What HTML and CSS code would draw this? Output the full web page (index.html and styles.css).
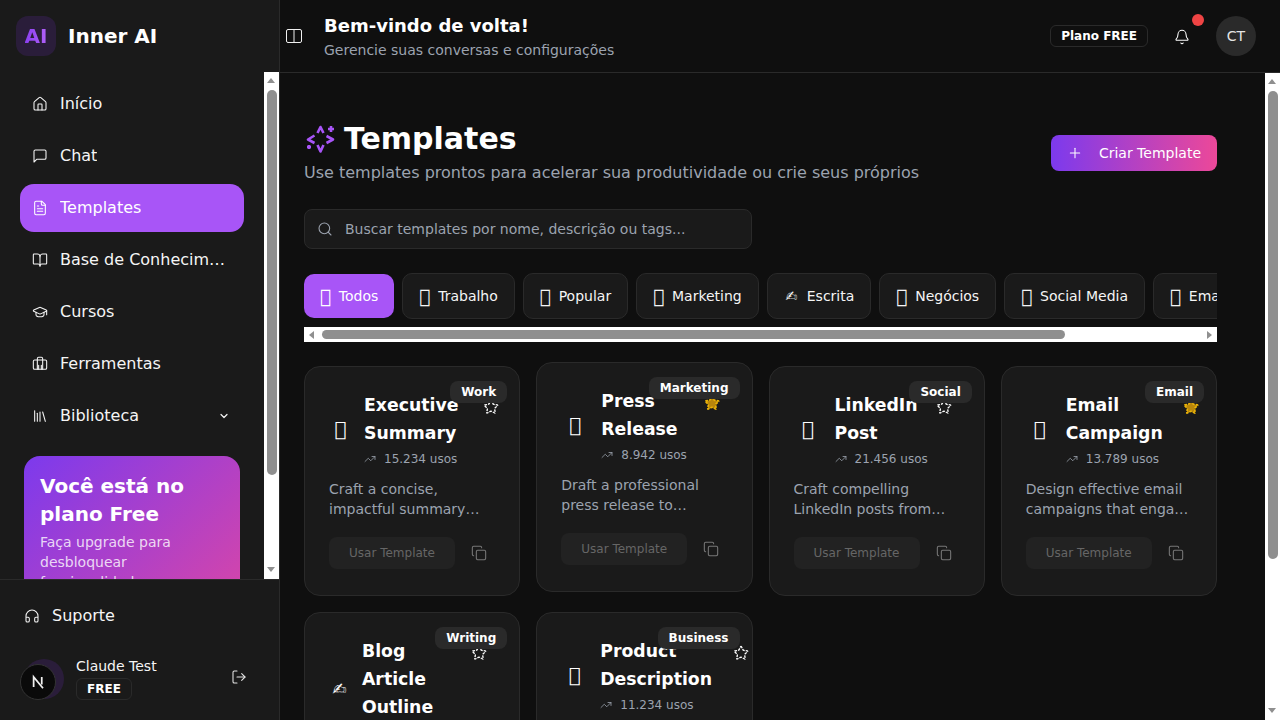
FILE: index.html
```html
<!DOCTYPE html>
<html lang="pt-BR">
<head>
<meta charset="utf-8">
<title>Inner AI - Templates</title>
<link rel="stylesheet" href="styles.css">
</head>
<body>
<div class="app">
  <aside class="sidebar">
    <div class="brand">
      <div class="brand-logo"><span class="brand-ai">AI</span></div>
      <span class="brand-name">Inner AI</span>
    </div>
    <div class="side-body">
      <div class="side-scroll">
        <nav class="nav">
          <a class="nav-item"><svg class="ic" viewBox="0 0 24 24"><path d="M15 21v-8a1 1 0 0 0-1-1h-4a1 1 0 0 0-1 1v8"/><path d="M3 10a2 2 0 0 1 .709-1.528l7-5.999a2 2 0 0 1 2.582 0l7 5.999A2 2 0 0 1 21 10v9a2 2 0 0 1-2 2H5a2 2 0 0 1-2-2z"/></svg><span class="nav-label">Início</span></a>
          <a class="nav-item"><svg class="ic" viewBox="0 0 24 24"><path d="M21 15a2 2 0 0 1-2 2H7l-4 4V5a2 2 0 0 1 2-2h14a2 2 0 0 1 2 2z"/></svg><span class="nav-label">Chat</span></a>
          <a class="nav-item active"><svg class="ic" viewBox="0 0 24 24"><path d="M15 2H6a2 2 0 0 0-2 2v16a2 2 0 0 0 2 2h12a2 2 0 0 0 2-2V7Z"/><path d="M14 2v4a2 2 0 0 0 2 2h4"/><path d="M10 9H8"/><path d="M16 13H8"/><path d="M16 17H8"/></svg><span class="nav-label">Templates</span></a>
          <a class="nav-item"><svg class="ic" viewBox="0 0 24 24"><path d="M12 7v14"/><path d="M3 18a1 1 0 0 1-1-1V4a1 1 0 0 1 1-1h5a4 4 0 0 1 4 4 4 4 0 0 1 4-4h5a1 1 0 0 1 1 1v13a1 1 0 0 1-1 1h-6a3 3 0 0 0-3 3 3 3 0 0 0-3-3z"/></svg><span class="nav-label">Base de Conhecimento</span></a>
          <a class="nav-item"><svg class="ic" viewBox="0 0 24 24"><path d="M21.42 10.922a1 1 0 0 0-.019-1.838L12.83 5.18a2 2 0 0 0-1.66 0L2.6 9.08a1 1 0 0 0 0 1.832l8.57 3.908a2 2 0 0 0 1.66 0z"/><path d="M22 10v6"/><path d="M6 12.5V16a6 3 0 0 0 12 0v-3.5"/></svg><span class="nav-label">Cursos</span></a>
          <a class="nav-item"><svg class="ic" viewBox="0 0 24 24"><path d="M16 20V4a2 2 0 0 0-2-2h-4a2 2 0 0 0-2 2v16"/><rect x="2" y="6" width="20" height="14" rx="2"/><path d="M10 20v-6M14 20v-6"/></svg><span class="nav-label">Ferramentas</span></a>
          <a class="nav-item"><svg class="ic" viewBox="0 0 24 24"><path d="m16 6 4 14"/><path d="M12 6v14"/><path d="M8 8v12"/><path d="M4 4v16"/></svg><span class="nav-label">Biblioteca</span><svg class="ic-chev" viewBox="0 0 24 24"><path d="m6 9 6 6 6-6"/></svg></a>
        </nav>
        <section class="promo">
          <h3 class="promo-title">Você está no plano Free</h3>
          <p class="promo-text">Faça upgrade para desbloquear funcionalidades</p>
        </section>
      </div>
      <div class="vbar side-bar"><i class="arr-up"></i><i class="thumb-v"></i><i class="arr-down"></i></div>
    </div>
    <div class="side-foot">
      <a class="support"><svg class="ic" viewBox="0 0 24 24"><path d="M3 14h3a2 2 0 0 1 2 2v3a2 2 0 0 1-2 2H5a2 2 0 0 1-2-2v-7a9 9 0 0 1 18 0v7a2 2 0 0 1-2 2h-1a2 2 0 0 1-2-2v-3a2 2 0 0 1 2-2h3"/></svg><span>Suporte</span></a>
      <div class="user">
        <div class="user-avatar"></div>
        <div class="user-info">
          <div class="user-name">Claude Test</div>
          <span class="user-plan">FREE</span>
        </div>
        <svg class="ic logout" viewBox="0 0 24 24"><path d="M9 21H5a2 2 0 0 1-2-2V5a2 2 0 0 1 2-2h4"/><path d="m16 17 5-5-5-5"/><path d="M21 12H9"/></svg>
      </div>
    </div>
  </aside>

  <div class="content">
    <header class="topbar">
      <svg class="panel" viewBox="0 0 16 16"><rect x=".5" y="1.500" width="15" height="13" rx="1.500"/><path d="M8 1.500v13"/></svg>
      <div class="top-titles">
        <div class="top-title">Bem-vindo de volta!</div>
        <div class="top-sub">Gerencie suas conversas e configurações</div>
      </div>
      <span class="plan-chip">Plano FREE</span>
      <div class="bell"><svg class="ic" viewBox="0 0 24 24"><path d="M10.268 21a2 2 0 0 0 3.464 0"/><path d="M3.262 15.326A1 1 0 0 0 4 17h16a1 1 0 0 0 .74-1.673C19.41 13.956 18 12.499 18 8A6 6 0 0 0 6 8c0 4.499-1.411 5.956-2.738 7.326"/></svg><span class="bell-dot"></span></div>
      <div class="avatar">CT</div>
    </header>

    <div class="main-wrap">
      <main class="main">
        <div class="page-head">
          <div>
            <div class="page-title-row">
              <svg class="spark" viewBox="0 0 32 32"><path d="M13.500 10 16.500 4 19.500 10"/><path d="M13.500 22 16.500 28.500 19.500 22"/><path d="M10.500 12.500 4 16.500 10.500 20"/><path d="M22.500 13 29 16.500 22.500 20"/><path d="M27 3v6M24 6h6"/><path d="M3 24h4M5 22v4"/></svg>
              <h1 class="page-title">Templates</h1>
            </div>
            <p class="page-sub">Use templates prontos para acelerar sua produtividade ou crie seus próprios</p>
          </div>
          <button class="create-btn"><svg class="ic" viewBox="0 0 24 24"><path d="M5 12h14"/><path d="M12 5v14"/></svg><span>Criar Template</span></button>
        </div>

        <label class="search">
          <svg class="ic" viewBox="0 0 24 24"><path d="m21 21-4.340-4.340"/><circle cx="11" cy="11" r="8"/></svg>
          <input class="search-input" type="text" placeholder="Buscar templates por nome, descrição ou tags...">
        </label>

        <div class="tags">
          <button class="tag on"><span class="tag-ic">&#xE123;</span>Todos</button>
          <button class="tag"><span class="tag-ic">&#xE123;</span>Trabalho</button>
          <button class="tag"><span class="tag-ic">&#xE123;</span>Popular</button>
          <button class="tag"><span class="tag-ic">&#xE123;</span>Marketing</button>
          <button class="tag"><span class="tag-pen">&#x270D;&#xFE0E;</span>Escrita</button>
          <button class="tag"><span class="tag-ic">&#xE123;</span>Negócios</button>
          <button class="tag"><span class="tag-ic">&#xE123;</span>Social Media</button>
          <button class="tag"><span class="tag-ic">&#xE123;</span>Email</button>
        </div>
        <div class="hbar"><i class="arr-left"></i><i class="thumb-h"></i><i class="arr-right"></i></div>

        <div class="grid">
          <article class="card c-exec">
            <span class="badge">Work</span>
            <div class="head">
              <div class="emoji">&#xE123;</div>
              <div class="head-text">
                <h3 class="name">Executive Summary</h3>
                <div class="uses"><svg class="ic-sm" viewBox="0 0 24 24"><path d="M22 7 13.500 15.500 8.500 10.500 2 17"/><path d="M16 7h6v6"/></svg>15.234 usos</div>
              </div>
              <button class="star"><svg class="ic-star" viewBox="0 0 24 24"><path d="M11.525 2.295a.53.53 0 0 1 .95 0l2.31 4.679a2.123 2.123 0 0 0 1.595 1.160l5.166.756a.53.53 0 0 1 .294.904l-3.736 3.638a2.123 2.123 0 0 0-.611 1.878l.882 5.140a.53.53 0 0 1-.771.560l-4.618-2.428a2.122 2.122 0 0 0-1.973 0L6.396 21.010a.53.53 0 0 1-.770-.560l.881-5.139a2.122 2.122 0 0 0-.611-1.879L2.160 9.795a.53.53 0 0 1 .294-.906l5.165-.755a2.122 2.122 0 0 0 1.597-1.160z"/></svg></button>
            </div>
            <p class="desc">Craft a concise, impactful summary highlighting the key points</p>
            <div class="actions">
              <button class="use">Usar Template</button>
              <svg class="ic copy" viewBox="0 0 24 24"><rect x="8" y="8" width="14" height="14" rx="2"/><path d="M4 16c-1.100 0-2-.9-2-2V4c0-1.100.9-2 2-2h10c1.100 0 2 .9 2 2"/></svg>
            </div>
          </article>

          <article class="card raised c-press">
            <span class="badge">Marketing</span>
            <div class="head">
              <div class="emoji">&#xE123;</div>
              <div class="head-text">
                <h3 class="name">Press Release</h3>
                <div class="uses"><svg class="ic-sm" viewBox="0 0 24 24"><path d="M22 7 13.500 15.500 8.500 10.500 2 17"/><path d="M16 7h6v6"/></svg>8.942 usos</div>
              </div>
              <button class="star fav"><svg class="ic-star" viewBox="0 0 24 24"><path d="M11.525 2.295a.53.53 0 0 1 .95 0l2.31 4.679a2.123 2.123 0 0 0 1.595 1.160l5.166.756a.53.53 0 0 1 .294.904l-3.736 3.638a2.123 2.123 0 0 0-.611 1.878l.882 5.140a.53.53 0 0 1-.771.560l-4.618-2.428a2.122 2.122 0 0 0-1.973 0L6.396 21.010a.53.53 0 0 1-.770-.560l.881-5.139a2.122 2.122 0 0 0-.611-1.879L2.160 9.795a.53.53 0 0 1 .294-.906l5.165-.755a2.122 2.122 0 0 0 1.597-1.160z"/></svg></button>
            </div>
            <p class="desc">Draft a professional press release to announce your company news</p>
            <div class="actions">
              <button class="use">Usar Template</button>
              <svg class="ic copy" viewBox="0 0 24 24"><rect x="8" y="8" width="14" height="14" rx="2"/><path d="M4 16c-1.100 0-2-.9-2-2V4c0-1.100.9-2 2-2h10c1.100 0 2 .9 2 2"/></svg>
            </div>
          </article>

          <article class="card c-link">
            <span class="badge">Social</span>
            <div class="head">
              <div class="emoji">&#xE123;</div>
              <div class="head-text">
                <h3 class="name">LinkedIn Post</h3>
                <div class="uses"><svg class="ic-sm" viewBox="0 0 24 24"><path d="M22 7 13.500 15.500 8.500 10.500 2 17"/><path d="M16 7h6v6"/></svg>21.456 usos</div>
              </div>
              <button class="star"><svg class="ic-star" viewBox="0 0 24 24"><path d="M11.525 2.295a.53.53 0 0 1 .95 0l2.31 4.679a2.123 2.123 0 0 0 1.595 1.160l5.166.756a.53.53 0 0 1 .294.904l-3.736 3.638a2.123 2.123 0 0 0-.611 1.878l.882 5.140a.53.53 0 0 1-.771.560l-4.618-2.428a2.122 2.122 0 0 0-1.973 0L6.396 21.010a.53.53 0 0 1-.770-.560l.881-5.139a2.122 2.122 0 0 0-.611-1.879L2.160 9.795a.53.53 0 0 1 .294-.906l5.165-.755a2.122 2.122 0 0 0 1.597-1.160z"/></svg></button>
            </div>
            <p class="desc">Craft compelling LinkedIn posts from your ideas and experience</p>
            <div class="actions">
              <button class="use">Usar Template</button>
              <svg class="ic copy" viewBox="0 0 24 24"><rect x="8" y="8" width="14" height="14" rx="2"/><path d="M4 16c-1.100 0-2-.9-2-2V4c0-1.100.9-2 2-2h10c1.100 0 2 .9 2 2"/></svg>
            </div>
          </article>

          <article class="card c-email">
            <span class="badge">Email</span>
            <div class="head">
              <div class="emoji">&#xE123;</div>
              <div class="head-text">
                <h3 class="name">Email Campaign</h3>
                <div class="uses"><svg class="ic-sm" viewBox="0 0 24 24"><path d="M22 7 13.500 15.500 8.500 10.500 2 17"/><path d="M16 7h6v6"/></svg>13.789 usos</div>
              </div>
              <button class="star fav"><svg class="ic-star" viewBox="0 0 24 24"><path d="M11.525 2.295a.53.53 0 0 1 .95 0l2.31 4.679a2.123 2.123 0 0 0 1.595 1.160l5.166.756a.53.53 0 0 1 .294.904l-3.736 3.638a2.123 2.123 0 0 0-.611 1.878l.882 5.140a.53.53 0 0 1-.771.560l-4.618-2.428a2.122 2.122 0 0 0-1.973 0L6.396 21.010a.53.53 0 0 1-.770-.560l.881-5.139a2.122 2.122 0 0 0-.611-1.879L2.160 9.795a.53.53 0 0 1 .294-.906l5.165-.755a2.122 2.122 0 0 0 1.597-1.160z"/></svg></button>
            </div>
            <p class="desc">Design effective email campaigns that engage your audience</p>
            <div class="actions">
              <button class="use">Usar Template</button>
              <svg class="ic copy" viewBox="0 0 24 24"><rect x="8" y="8" width="14" height="14" rx="2"/><path d="M4 16c-1.100 0-2-.9-2-2V4c0-1.100.9-2 2-2h10c1.100 0 2 .9 2 2"/></svg>
            </div>
          </article>

          <article class="card c-blog">
            <span class="badge">Writing</span>
            <div class="head">
              <div class="emoji emoji-pen">&#x270D;&#xFE0E;</div>
              <div class="head-text">
                <h3 class="name">Blog Article Outline</h3>
                <div class="uses"><svg class="ic-sm" viewBox="0 0 24 24"><path d="M22 7 13.500 15.500 8.500 10.500 2 17"/><path d="M16 7h6v6"/></svg>18.321 usos</div>
              </div>
              <button class="star"><svg class="ic-star" viewBox="0 0 24 24"><path d="M11.525 2.295a.53.53 0 0 1 .95 0l2.31 4.679a2.123 2.123 0 0 0 1.595 1.160l5.166.756a.53.53 0 0 1 .294.904l-3.736 3.638a2.123 2.123 0 0 0-.611 1.878l.882 5.140a.53.53 0 0 1-.771.560l-4.618-2.428a2.122 2.122 0 0 0-1.973 0L6.396 21.010a.53.53 0 0 1-.770-.560l.881-5.139a2.122 2.122 0 0 0-.611-1.879L2.160 9.795a.53.53 0 0 1 .294-.906l5.165-.755a2.122 2.122 0 0 0 1.597-1.160z"/></svg></button>
            </div>
          </article>

          <article class="card c-prod">
            <span class="badge">Business</span>
            <div class="head">
              <div class="emoji">&#xE123;</div>
              <div class="head-text">
                <h3 class="name">Product Description</h3>
                <div class="uses"><svg class="ic-sm" viewBox="0 0 24 24"><path d="M22 7 13.500 15.500 8.500 10.500 2 17"/><path d="M16 7h6v6"/></svg>11.234 usos</div>
              </div>
              <button class="star"><svg class="ic-star" viewBox="0 0 24 24"><path d="M11.525 2.295a.53.53 0 0 1 .95 0l2.31 4.679a2.123 2.123 0 0 0 1.595 1.160l5.166.756a.53.53 0 0 1 .294.904l-3.736 3.638a2.123 2.123 0 0 0-.611 1.878l.882 5.140a.53.53 0 0 1-.771.560l-4.618-2.428a2.122 2.122 0 0 0-1.973 0L6.396 21.010a.53.53 0 0 1-.770-.560l.881-5.139a2.122 2.122 0 0 0-.611-1.879L2.160 9.795a.53.53 0 0 1 .294-.906l5.165-.755a2.122 2.122 0 0 0 1.597-1.160z"/></svg></button>
            </div>
          </article>
        </div>
      </main>
      <div class="vbar main-bar"><i class="arr-up"></i><i class="thumb-v"></i><i class="arr-down"></i></div>
    </div>
  </div>
</div>
<div class="dev-badge"><svg class="dev-n" viewBox="0 0 16 16"><path d="M4.500 12V4L12 13"/><path d="M11 4v6"/></svg></div>
</body>
</html>
```
FILE: styles.css
```css
* { box-sizing: border-box; }
html, body { margin: 0; height: 100%; overflow: hidden; }
body { font-family: "DejaVu Sans", sans-serif; color: #fff; background: #0f0f0f; line-height: 24px; }
h1, h3, p { margin: 0; }
button, input { font-family: inherit; }

.app { display: flex; height: 720px; }

.ic { width: 16px; height: 16px; flex: none; fill: none; stroke: currentColor; stroke-width: 1.6; stroke-linecap: round; stroke-linejoin: round; }
.ic-sm { width: 12px; height: 12px; flex: none; fill: none; stroke: currentColor; stroke-width: 1.6; stroke-linecap: round; stroke-linejoin: round; }
.ic-chev { width: 12px; height: 12px; margin-left: auto; margin-right: -2px; flex: none; fill: none; stroke: currentColor; stroke-width: 2.4; stroke-linecap: round; stroke-linejoin: round; }

/* Scrollbars */
.vbar { width: 15px; flex: none; display: flex; flex-direction: column; background: #fff; }
.arr-up { width: 0; height: 0; margin: 6px 0 0 3px; border-left: 4.500px solid transparent; border-right: 4.500px solid transparent; border-bottom: 5px solid #8f8f8f; }
.arr-down { width: 0; height: 0; margin: auto 0 7px 3px; border-left: 4.500px solid transparent; border-right: 4.500px solid transparent; border-top: 5px solid #8f8f8f; }
.thumb-v { width: 9.500px; margin: 7px 0 0 3px; border-radius: 5px; background: #8f8f8f; }
.side-bar .thumb-v { height: 385px; }
.main-bar .thumb-v { height: 468px; }
.hbar { height: 15px; display: flex; align-items: center; background: #fff; }
.arr-left { width: 0; height: 0; margin-left: 5px; border-top: 4.500px solid transparent; border-bottom: 4.500px solid transparent; border-right: 5px solid #8f8f8f; }
.arr-right { width: 0; height: 0; margin: 0 5px 0 auto; border-top: 4.500px solid transparent; border-bottom: 4.500px solid transparent; border-left: 5px solid #8f8f8f; }
.thumb-h { width: 743px; height: 9.500px; margin-left: 8px; border-radius: 5px; background: #8f8f8f; }

/* Sidebar */
.sidebar { width: 280px; flex: none; display: flex; flex-direction: column; background: #1a1a1a; border-right: 1px solid #2a2a2a; }
.brand { height: 72px; flex: none; display: flex; align-items: center; gap: 12px; padding: 0 16px; }
.brand-logo { width: 40px; height: 40px; border-radius: 12px; background: #2a1d3a; display: flex; align-items: center; justify-content: center; }
.brand-ai { font-size: 20px; font-weight: 700; background: linear-gradient(90deg, #8b3ff0, #b060f8); -webkit-background-clip: text; background-clip: text; color: transparent; }
.brand-name { font-size: 20px; font-weight: 700; }
.side-body { flex: 1; min-height: 0; display: flex; }
.side-scroll { flex: 1; min-width: 0; overflow: hidden; padding: 8px 20px; }
.nav { display: flex; flex-direction: column; gap: 4px; }
.nav-item { height: 48px; display: flex; align-items: center; gap: 12px; padding: 0 16px 0 12px; border-radius: 14px; font-size: 16px; color: #f5f5f5; }
.nav-item.active { background: #a855f7; color: #fff; }
.nav-label { overflow: hidden; text-overflow: ellipsis; white-space: nowrap; }
.promo { margin: 16px 4px 0; padding: 16px; height: 235px; border-radius: 16px; background: linear-gradient(135deg, #7c3aed, #ec4899); }
.promo-title { font-size: 20px; line-height: 28px; font-weight: 700; }
.promo-text { font-size: 14px; line-height: 20px; margin-top: 4px; color: rgba(255,255,255,.8); }
.side-foot { height: 141px; flex: none; border-top: 1px solid #2a2a2a; }
.support { display: flex; align-items: center; gap: 12px; height: 24px; margin: 24px 0 0 24px; font-size: 16px; color: #f5f5f5; }
.user { display: flex; align-items: center; margin: 29px 32px 0 24px; }
.user-avatar { width: 40px; height: 40px; border-radius: 50%; background: #2a1d3a; flex: none; }
.user-info { margin-left: 12px; flex: 1; }
.user-name { font-size: 14px; line-height: 20px; color: #f5f5f5; margin-top: -1px; }
.user-plan { display: block; width: 56px; height: 22px; margin-top: 2px; border: 1px solid #2a2a2a; border-radius: 6px; font-size: 12px; font-weight: 700; line-height: 20px; text-align: center; }
.logout { color: #e5e5e5; margin-bottom: 4px; }
.dev-badge { position: absolute; left: 20px; top: 664px; width: 36px; height: 36px; border-radius: 50%; background: #0a0a0a; border: 1px solid #333; display: flex; align-items: center; justify-content: center; }
.dev-n { width: 20px; height: 20px; fill: none; stroke: #f0f0f0; stroke-width: 1.4; }

/* Top */
.content { flex: 1; min-width: 0; display: flex; flex-direction: column; background: #0f0f0f; }
.topbar { height: 73px; flex: none; display: flex; align-items: center; padding: 0 24px 0 6px; border-bottom: 1px solid #2a2a2a; }
.panel { width: 16px; height: 16px; flex: none; fill: none; stroke: #f0f0f0; stroke-width: 1; }
.top-titles { margin-left: 22px; flex: 1; }
.top-title { font-size: 18px; line-height: 28px; font-weight: 700; }
.top-sub { font-size: 14px; line-height: 20px; color: #9ca3af; }
.plan-chip { height: 22px; padding: 0 10px; border: 1px solid #2a2a2a; border-radius: 6px; font-size: 12px; font-weight: 700; line-height: 20px; }
.bell { position: relative; margin-left: 26px; width: 16px; height: 16px; color: #fff; }
.bell-dot { position: absolute; left: 10px; top: -22px; width: 12px; height: 12px; margin: 8px 0 0 8px; border-radius: 50%; background: #ef4444; }
.avatar { margin-left: 26px; width: 40px; height: 40px; border-radius: 50%; background: #2a2a2a; color: #e5e5e5; font-size: 14px; display: flex; align-items: center; justify-content: center; }

/* Main */
.main-wrap { flex: 1; min-height: 0; display: flex; }
.main { flex: 1; min-width: 0; overflow: hidden; padding: 48px 48px 24px 24px; }
.page-head { display: flex; justify-content: space-between; align-items: center; }
.page-title-row { display: flex; align-items: center; gap: 8px; }
.spark { width: 32px; height: 32px; flex: none; fill: none; stroke: #a855f7; stroke-width: 2.6; stroke-linejoin: round; }
.page-title { font-size: 30px; line-height: 36px; font-weight: 700; }
.page-sub { margin-top: 4px; font-size: 16px; line-height: 24px; color: #9ca3af; }
.create-btn { display: flex; align-items: center; gap: 16px; height: 36px; flex: none; padding: 0 16px; white-space: nowrap; border: 0; border-radius: 8px; background: linear-gradient(90deg, #7c3aed, #ec4899); color: #fff; font-size: 14px; }
.search { margin-top: 24px; display: flex; align-items: center; gap: 12px; width: 448px; height: 40px; padding: 0 12px; background: #1a1a1a; border: 1px solid #2a2a2a; border-radius: 8px; color: #9ca3af; }
.search-input { flex: 1; min-width: 0; border: 0; outline: 0; padding: 0; background: transparent; font-size: 14px; color: #fff; }
.search-input::placeholder { color: #9ca3af; opacity: 1; }
.tags { margin-top: 24px; display: flex; align-items: center; gap: 8px; overflow: hidden; padding-bottom: 8px; }
.tag { flex: none; display: flex; align-items: center; gap: 8px; padding: 12px 16px; line-height: 20px; font-size: 14px; color: #f5f5f5; background: #1a1a1a; border: 1px solid #2a2a2a; border-radius: 10px; }
.tag.on { background: #a855f7; border: 0; color: #fff; }
.tag-ic { width: 10.850px; font-size: 19px; line-height: 20px; text-align: center; }
.tag-pen { width: 15px; }
.grid { margin-top: 24px; display: grid; grid-template-columns: repeat(4, minmax(0, 1fr)); gap: 16px; }

/* Card */
.card { position: relative; padding: 24px 24px 26px; background: #1a1a1a; border: 1px solid #2a2a2a; border-radius: 16px; }
.card.raised { margin: -4px 0 4px; }
.badge { position: absolute; z-index: 1; top: 14px; right: 12px; height: 22px; padding: 0 11px; border-radius: 8px; background: #2a2a2a; font-size: 12px; font-weight: 700; line-height: 22px; }
.head { display: flex; align-items: center; gap: 12px; }
.emoji { flex: none; width: var(--emoji-w); text-align: center; font-size: 20px; line-height: 24px; }
.emoji-pen { font-size: 17px; }
.head-text { flex: none; width: var(--text-w); }
.name { font-size: 17.300px; line-height: 28px; font-weight: 700; }
.uses { margin-top: 4px; display: flex; align-items: center; gap: 8px; font-size: 12px; line-height: 16px; color: #9ca3af; }
.star { flex: none; align-self: flex-start; margin-left: -13px; padding: 8px; border: 0; background: none; display: flex; color: #fff; }
.ic-star { width: 16px; height: 16px; fill: none; stroke: currentColor; stroke-width: 2; stroke-dasharray: 4 1.500; }
.star.fav { color: #eab308; }
.star.fav .ic-star { fill: #b8860b; stroke-width: 2.500; }
.desc { margin-top: 12px; font-size: 14px; line-height: 20px; color: #9ca3af; display: -webkit-box; -webkit-box-orient: vertical; -webkit-line-clamp: 2; overflow: hidden; }
.actions { margin-top: 18px; display: flex; align-items: center; gap: 16px; }
.use { width: 126px; height: 32px; border: 0; border-radius: 8px; background: #222; color: #666; font-size: 12px; }
.copy { color: #777; }

.c-exec { --emoji-w: 23px; --text-w: 112px; }
.c-press { --emoji-w: 28px; --text-w: 96px; }
.c-link { --emoji-w: 29px; --text-w: 94px; }
.c-email { --emoji-w: 28px; --text-w: 110px; }
.c-blog { --emoji-w: 21px; --text-w: 102px; }
.c-prod { --emoji-w: 27px; --text-w: 126px; }
```
